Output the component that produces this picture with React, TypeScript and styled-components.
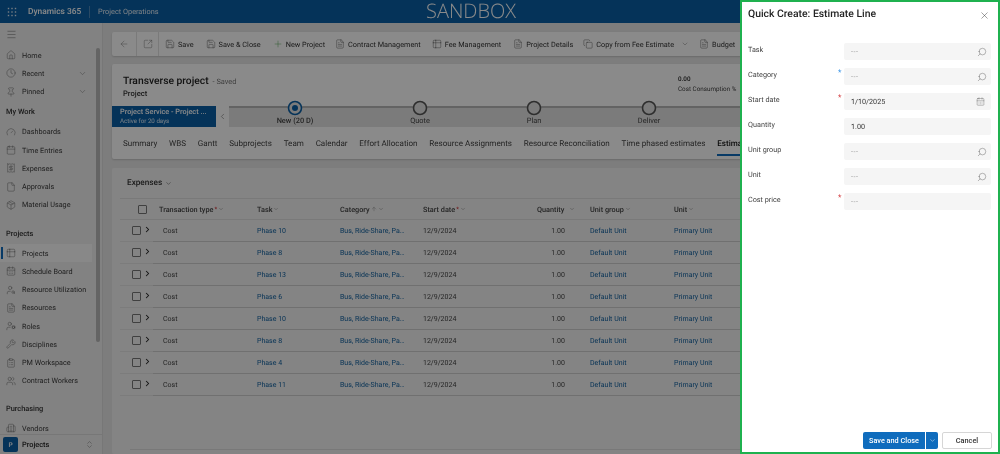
import React from "react";
import styled, { createGlobalStyle } from "styled-components";
import {
  ArrowLeft, Calendar, CalendarDays, ChevronDown, ChevronLeft, ChevronRight, ChevronsUpDown, ClipboardList, Clock,
  Copy, File, FileText, Gauge, Home, Menu, Package, Pin, Plus, Receipt, Save, Search, SquareArrowOutUpRight,
  Table2, UserCog, UserSearch, Users, Wrench, X, ArrowUp, Building2,
} from "lucide-react";

const Global = createGlobalStyle`
  html, body { margin: 0; padding: 0; width: 1000px; height: 454px; overflow: hidden; background: #fff; }
  body { font-family: Roboto, "Open Sans", sans-serif; color: #242424; text-rendering: geometricPrecision; }
  * { box-sizing: border-box; }
`;

const Page = styled.div`
  position: relative;
  width: 1000px;
  height: 454px;
  overflow: hidden;
  display: flex;
  flex-direction: column;
  filter: blur(0.35px);
`;
const Header = styled.header`
  height: 23px;
  flex: none;
  background: #0b5fa5;
  display: flex;
  align-items: center;
  color: #fff;
  position: relative;
`;
const Waffle = styled.span`
  display: flex;
  margin-left: 6px;
  width: 11px;
  justify-content: center;
  color: #dbe8f3;
`;
const Brand = styled.span`
  margin-left: 11px;
  font-size: 8.4px;
  font-weight: 500;
  width: 61px;
  white-space: nowrap;
`;
const AppName = styled.span`
  border-left: 1px solid #4d88ba;
  padding-left: 8px;
  font-size: 7.35px;
  line-height: 12px;
  white-space: nowrap;
  color: #e4eef6;
`;
const Sandbox = styled.span`
  position: absolute;
  left: 426px;
  top: 0;
  font-family: "Open Sans", sans-serif;
  font-size: 20px;
  font-weight: 300;
  line-height: 22px;
  color: #fff;
`;
const Body = styled.div`
  flex: 1;
  display: flex;
  min-height: 0;
  background: #e8e8e8;
`;
const Sidebar = styled.aside`
  position: relative;
  width: 103px;
  flex: none;
  background: #f0f0f0;
  border-right: 1px solid #dcdcdc;
  display: flex;
  flex-direction: column;
`;
const NavScroll = styled.nav`
  flex: 1;
  min-height: 0;
  overflow: hidden;
`;
const Hamburger = styled.div`
  height: 23px;
  padding-left: 6px;
  display: flex;
  align-items: center;
  color: #555;
`;
const NavItem = styled.div<{ $active?: boolean }>`
  position: relative;
  height: 18.25px;
  margin-right: 10px;
  padding-left: 6px;
  display: flex;
  align-items: center;
  gap: 6px;
  font-size: 7.25px;
  white-space: nowrap;
  color: #3a3a3a;
  background: ${(p) => (p.$active ? "#fbfbfb" : "transparent")};
  svg { flex: none; color: #555; }
`;
const ActiveMark = styled.span`
  position: absolute;
  left: 1px;
  top: 3px;
  width: 2px;
  height: 12px;
  background: #0f6cbd;
`;
const NavChevron = styled.span`
  margin-left: auto;
  margin-right: 5px;
  display: flex;
`;
const GroupTitle = styled.div<{ $gap?: number }>`
  height: 22px;
  margin-top: ${(p) => p.$gap ?? 0}px;
  padding-left: 6px;
  display: flex;
  align-items: center;
  font-size: 7.4px;
  font-weight: 500;
  color: #333;
`;
const ScrollThumb = styled.span`
  position: absolute;
  left: 96px;
  top: 25px;
  width: 4px;
  height: 294px;
  border-radius: 2px;
  background: #b9b9b9;
`;
const AreaSwitch = styled.div`
  height: 20px;
  flex: none;
  border-top: 1px solid #ddd;
  display: flex;
  align-items: center;
  padding: 0 8px 0 3px;
  font-size: 7.4px;
  font-weight: 500;
  background: #f0f0f0;
`;
const AreaBadge = styled.span`
  width: 15px;
  height: 15px;
  margin-right: 4px;
  border-radius: 2px;
  background: #0b5fa5;
  color: #fff;
  font-size: 6.5px;
  display: flex;
  align-items: center;
  justify-content: center;
`;
const AreaArrows = styled.span`
  margin-left: auto;
  display: flex;
  color: #555;
`;
const Main = styled.main`
  flex: 1;
  min-width: 0;
  padding: 9px 0 0 9px;
  display: flex;
  flex-direction: column;
  overflow: hidden;
`;
const CommandBar = styled.div`
  height: 24px;
  flex: none;
  margin-bottom: 8px;
  background: #fff;
  border-radius: 2px;
  box-shadow: 0 1px 2px rgba(0, 0, 0, 0.16);
  display: flex;
  align-items: center;
  font-size: 7.3px;
  white-space: nowrap;
  color: #333;
  overflow: hidden;
`;
const IconCell = styled.span<{ $w: number }>`
  width: ${(p) => p.$w}px;
  height: 100%;
  flex: none;
  display: flex;
  align-items: center;
  justify-content: center;
  color: #666;
  border-right: 1px solid #e2e2e2;
`;
const Command = styled.span<{ $left: number }>`
  margin-left: ${(p) => p.$left}px;
  flex: none;
  display: flex;
  align-items: center;
  gap: 3px;
  svg { color: #444; }
`;
const FormCard = styled.section`
  height: 95px;
  flex: none;
  margin-bottom: 9px;
  background: #fff;
  border-radius: 2px;
  box-shadow: 0 1px 2px rgba(0, 0, 0, 0.16);
  display: flex;
  flex-direction: column;
`;
const TitleRow = styled.div`
  height: 42px;
  flex: none;
  padding: 9px 0 0 11px;
  display: flex;
  justify-content: space-between;
`;
const Title = styled.div`
  font-size: 10.3px;
  font-weight: 500;
  line-height: 15px;
  white-space: nowrap;
`;
const Saved = styled.span`
  font-size: 7.4px;
  font-weight: 400;
  color: #777;
  margin-left: 4px;
`;
const EntityName = styled.div`
  font-size: 7.6px;
  font-weight: 500;
  line-height: 11px;
  margin-top: -1px;
  color: #333;
`;
const Metric = styled.div`
  width: 322px;
  padding-top: 1px;
  font-size: 6.3px;
  line-height: 10px;
  color: #444;
  white-space: nowrap;
  flex: none;
`;
const MetricValue = styled.div`
  font-weight: 500;
  color: #222;
`;
const Process = styled.div`
  height: 21px;
  flex: none;
  display: flex;
`;
const StageBanner = styled.div`
  width: 104px;
  flex: none;
  background: #0b5fa5;
  color: #fff;
  padding: 1px 0 0 8px;
  white-space: nowrap;
`;
const BannerTitle = styled.div`
  font-size: 7.3px;
  font-weight: 500;
  line-height: 10px;
`;
const BannerSub = styled.div`
  font-size: 6.2px;
  line-height: 8px;
  color: #dcebf7;
`;
const Collapse = styled.div`
  width: 13px;
  flex: none;
  background: #fff;
  display: flex;
  align-items: center;
  justify-content: center;
  color: #444;
`;
const Track = styled.div`
  flex: 1;
  min-width: 0;
  background: #e4e4e4;
  border-top: 2px solid #b8b8b8;
  display: flex;
`;
const Stage = styled.div<{ $left: number }>`
  width: 60px;
  flex: none;
  margin-left: ${(p) => p.$left}px;
  margin-top: -8px;
  display: flex;
  flex-direction: column;
  align-items: center;
`;
const StageLabel = styled.span<{ $active?: boolean }>`
  font-size: 7.4px;
  line-height: 10px;
  white-space: nowrap;
  font-weight: ${(p) => (p.$active ? 500 : 400)};
  color: #444;
`;
const Tabs = styled.div`
  flex: 1;
  display: flex;
  gap: 11.8px;
  padding-left: 11px;
  align-items: flex-start;
  overflow: hidden;
`;
const Tab = styled.span<{ $active?: boolean }>`
  flex: none;
  height: 29px;
  padding-top: 10px;
  font-size: 8.05px;
  line-height: 13px;
  white-space: nowrap;
  color: ${(p) => (p.$active ? "#111" : "#444")};
  font-weight: ${(p) => (p.$active ? 500 : 400)};
  border-bottom: ${(p) => (p.$active ? "2px solid #0f6cbd" : "none")};
`;
const GridCard = styled.section`
  flex: 1;
  min-height: 0;
  background: #f4f4f4;
  border-radius: 2px;
  padding-left: 8px;
  display: flex;
  flex-direction: column;
`;
const GridHead = styled.div`
  height: 30px;
  flex: none;
  display: flex;
  align-items: center;
  padding-left: 7px;
  font-size: 8.2px;
  font-weight: 500;
  gap: 3px;
  color: #333;
`;
const AddButton = styled.span`
  margin-left: 598px;
  margin-bottom: 5px;
  display: flex;
  color: #666;
`;
const HeadRow = styled.div`
  height: 22px;
  flex: none;
  display: flex;
  align-items: center;
  border-top: 1px solid #e0e0e0;
  border-bottom: 1px solid #e0e0e0;
  font-size: 7.3px;
  font-weight: 500;
  color: #444;
`;
const HeadLead = styled.div`
  width: 39px;
  flex: none;
  padding-left: 18px;
  display: flex;
`;
const Box = styled.span`
  width: 9px;
  height: 9px;
  flex: none;
  border: 1px solid #777;
  border-radius: 1px;
`;
const HeadColumns = styled.div`
  display: grid;
  grid-template-columns: 98px 83px 83px 100px 67px 84px 70px;
`;
const HeadCell = styled.span<{ $indent?: number }>`
  display: flex;
  align-items: center;
  gap: 1px;
  white-space: nowrap;
  padding-left: ${(p) => p.$indent ?? 0}px;
`;
const Required = styled.span`
  color: #d13438;
  font-size: 6px;
`;
const Row = styled.div`
  height: 22px;
  flex: none;
  display: flex;
`;
const RowLead = styled.div`
  width: 33px;
  flex: none;
  padding-left: 12px;
  display: flex;
  align-items: center;
  gap: 2px;
  border-bottom: 1px solid #e6e6e6;
  svg { color: #222; margin-top: -2px; }
`;
const Cells = styled.div`
  flex: 1;
  display: grid;
  grid-template-columns: 94px 83px 83px 100px 42px 25px 84px 70px;
  align-items: center;
  padding: 1px 0 0 10px;
  border-bottom: 1px solid #d0d0d0;
  font-size: 7px;
  color: #444;
  white-space: nowrap;
`;
const LinkCell = styled.span<{ $clip?: boolean }>`
  color: #11609f;
  ${(p) => (p.$clip ? "max-width: 65px; overflow: hidden; text-overflow: ellipsis;" : "")}
`;
const QtyCell = styled.span`
  text-align: right;
`;
const GridFooter = styled.div`
  margin: 53px 0 0 10px;
  border-top: 1px solid #dedede;
  height: 3px;
  flex: none;
`;
const Overlay = styled.div`
  position: absolute;
  inset: 0;
  background: rgba(0, 0, 0, 0.46);
`;
const Panel = styled.aside`
  position: absolute;
  left: 740px;
  top: 0;
  width: 260px;
  height: 454px;
  background: #fff;
  border: 2px solid #1fb14f;
  display: flex;
  flex-direction: column;
`;
const PanelHead = styled.div`
  height: 39px;
  flex: none;
  padding: 4px 8px 0 6px;
  display: flex;
  justify-content: space-between;
  align-items: flex-start;
`;
const PanelTitle = styled.h2`
  margin: 0;
  font-size: 10.4px;
  line-height: 16px;
  font-weight: 500;
  color: #242424;
  white-space: nowrap;
`;
const CloseBtn = styled.span`
  display: flex;
  margin-top: 4px;
  color: #333;
`;
const Fields = styled.div`
  flex: 1;
  padding: 2px 7px 0 6px;
  display: flex;
  flex-direction: column;
  gap: 8px;
`;
const Field = styled.div`
  height: 17px;
  display: flex;
`;
const Label = styled.label`
  width: 90px;
  flex: none;
  font-size: 7.25px;
  line-height: 13px;
  color: #444;
`;
const Mark = styled.span<{ $blue?: boolean }>`
  width: 6px;
  flex: none;
  font-size: 8px;
  line-height: 9px;
  color: ${(p) => (p.$blue ? "#2f8fe6" : "#d13438")};
`;
const Input = styled.div<{ $filled?: boolean }>`
  width: 147px;
  margin-left: auto;
  flex: none;
  border-radius: 2px;
  background: #f5f5f5;
  padding: 0 4px 0 7px;
  display: flex;
  align-items: center;
  justify-content: space-between;
  font-size: 7.2px;
  letter-spacing: ${(p) => (p.$filled ? "0" : "0.5px")};
  color: ${(p) => (p.$filled ? "#333" : "#9a9a9a")};
  svg { color: #555; }
`;
const DateIcon = styled.span`
  display: flex;
  margin-right: 2px;
`;
const PanelFoot = styled.div`
  height: 20px;
  flex: none;
  padding: 0 6px 3px 0;
  display: flex;
  justify-content: flex-end;
  align-items: center;
`;
const PrimaryBtn = styled.button`
  height: 17px;
  width: 62px;
  border: 0;
  padding: 0;
  border-radius: 2px 0 0 2px;
  background: #0f6cbd;
  color: #fff;
  font: 500 7.3px Roboto, sans-serif;
  white-space: nowrap;
`;
const SplitBtn = styled.button`
  height: 17px;
  width: 12px;
  margin-left: 1px;
  margin-right: 4px;
  border: 0;
  padding: 0;
  border-radius: 0 2px 2px 0;
  background: #0f6cbd;
  color: #fff;
  display: flex;
  align-items: center;
  justify-content: center;
`;
const CancelBtn = styled.button`
  height: 17px;
  width: 50px;
  border: 1px solid #d6d6d6;
  border-radius: 2px;
  background: #fff;
  color: #333;
  font: 500 7.3px Roboto, sans-serif;
`;

const Ic = { size: 10, strokeWidth: 1 };

const work = [
  { t: "Dashboards", i: Gauge },
  { t: "Time Entries", i: Calendar },
  { t: "Expenses", i: Receipt },
  { t: "Approvals", i: File },
  { t: "Material Usage", i: Package },
];
const projects = [
  { t: "Projects", i: Table2, active: true },
  { t: "Schedule Board", i: CalendarDays },
  { t: "Resource Utilization", i: UserSearch },
  { t: "Resources", i: FileText },
  { t: "Roles", i: UserCog },
  { t: "Disciplines", i: Wrench },
  { t: "PM Workspace", i: ClipboardList },
  { t: "Contract Workers", i: Users },
];
const tabs = ["Summary", "WBS", "Gantt", "Subprojects", "Team", "Calendar", "Effort Allocation", "Resource Assignments", "Resource Reconciliation", "Time phased estimates"];
const phases = ["Phase 10", "Phase 8", "Phase 13", "Phase 6", "Phase 10", "Phase 8", "Phase 4", "Phase 11"];
const fields = [
  { l: "Task", v: "---", s: true },
  { l: "Category", v: "---", s: true, m: "blue" },
  { l: "Start date", v: "1/10/2025", c: true, m: "red", f: true },
  { l: "Quantity", v: "1.00", f: true },
  { l: "Unit group", v: "---", s: true },
  { l: "Unit", v: "---", s: true },
  { l: "Cost price", v: "---", m: "red" },
];
const stages = [
  { t: "New  (20 D)", left: 36, active: true },
  { t: "Quote", left: 65 },
  { t: "Plan", left: 54 },
  { t: "Deliver", left: 55 },
];
const waffleDots = [1.5, 5, 8.5];

function Head({ children, req, indent }: { children: React.ReactNode; req?: boolean; indent?: number }) {
  return (
    <HeadCell $indent={indent}>
      {children}
      {req && <Required>*</Required>}
      <ChevronDown size={6} strokeWidth={1.2} />
    </HeadCell>
  );
}

export default function App() {
  return (
    <Page>
      <Global />
      <Header>
        <Waffle>
          <svg width="10" height="10" viewBox="0 0 10 10" fill="currentColor">
            {waffleDots.map((y) => waffleDots.map((x) => <rect key={`${x}-${y}`} x={x - 0.7} y={y - 0.7} width="1.4" height="1.4" />))}
          </svg>
        </Waffle>
        <Brand>Dynamics 365</Brand>
        <AppName>Project Operations</AppName>
        <Sandbox>SANDBOX</Sandbox>
      </Header>
      <Body>
        <Sidebar>
          <NavScroll>
            <Hamburger><Menu size={11} strokeWidth={1} /></Hamburger>
            <NavItem><Home {...Ic} />Home</NavItem>
            <NavItem><Clock {...Ic} />Recent<NavChevron><ChevronDown size={9} strokeWidth={1} /></NavChevron></NavItem>
            <NavItem><Pin {...Ic} />Pinned<NavChevron><ChevronDown size={9} strokeWidth={1} /></NavChevron></NavItem>
            <GroupTitle>My Work</GroupTitle>
            {work.map(({ t, i: I }) => <NavItem key={t}><I {...Ic} />{t}</NavItem>)}
            <GroupTitle $gap={8}>Projects</GroupTitle>
            {projects.map(({ t, i: I, active }) => (
              <NavItem key={t} $active={active}>{active && <ActiveMark />}<I {...Ic} />{t}</NavItem>
            ))}
            <GroupTitle $gap={7}>Purchasing</GroupTitle>
            <NavItem><Building2 {...Ic} />Vendors</NavItem>
          </NavScroll>
          <ScrollThumb />
          <AreaSwitch>
            <AreaBadge>P</AreaBadge>Projects
            <AreaArrows><ChevronsUpDown size={9} strokeWidth={1} /></AreaArrows>
          </AreaSwitch>
        </Sidebar>
        <Main>
          <CommandBar>
            <IconCell $w={25}><ArrowLeft {...Ic} /></IconCell>
            <IconCell $w={22}><SquareArrowOutUpRight {...Ic} /></IconCell>
            <Command $left={6}><Save {...Ic} />Save</Command>
            <Command $left={12}><Save {...Ic} />Save &amp; Close</Command>
            <Command $left={12}><Plus size={10} strokeWidth={1} color="#3c9a3c" />New Project</Command>
            <Command $left={10}><FileText {...Ic} />Contract Management</Command>
            <Command $left={11}><Table2 {...Ic} />Fee Management</Command>
            <Command $left={12}><FileText {...Ic} />Project Details</Command>
            <Command $left={10}><Copy {...Ic} />Copy from Fee Estimate</Command>
            <Command $left={7}><ChevronDown size={8} strokeWidth={1} /></Command>
            <Command $left={10}><FileText {...Ic} />Budget</Command>
          </CommandBar>
          <FormCard>
            <TitleRow>
              <div>
                <Title>Transverse project<Saved>- Saved</Saved></Title>
                <EntityName>Project</EntityName>
              </div>
              <Metric>
                <MetricValue>0.00</MetricValue>
                Cost Consumption %
              </Metric>
            </TitleRow>
            <Process>
              <StageBanner>
                <BannerTitle>Project Service - Project ...</BannerTitle>
                <BannerSub>Active for 20 days</BannerSub>
              </StageBanner>
              <Collapse><ChevronLeft size={9} strokeWidth={1.2} /></Collapse>
              <Track>
                {stages.map((s) => (
                  <Stage key={s.t} $left={s.left}>
                    <svg width="16" height="16" viewBox="0 0 16 16">
                      <circle cx="8" cy="8" r="6.5" fill="#e4e4e4" stroke={s.active ? "#0b5fa5" : "#555"} strokeWidth="1.6" />
                      {s.active && <circle cx="8" cy="8" r="3" fill="#0b5fa5" />}
                    </svg>
                    <StageLabel $active={s.active}>{s.t}</StageLabel>
                  </Stage>
                ))}
              </Track>
            </Process>
            <Tabs>
              {tabs.map((t) => <Tab key={t}>{t}</Tab>)}
              <Tab $active>Estimates</Tab>
            </Tabs>
          </FormCard>
          <GridCard>
            <GridHead>
              Expenses <ChevronDown size={7} strokeWidth={1.5} />
              <AddButton><Plus size={9} strokeWidth={1} /></AddButton>
            </GridHead>
            <HeadRow>
              <HeadLead><Box /></HeadLead>
              <HeadColumns>
                <Head req>Transaction type</Head>
                <Head>Task</Head>
                <Head>Category <ArrowUp size={6} strokeWidth={1} /></Head>
                <Head req>Start date</Head>
                <Head indent={14}>Quantity&nbsp;&nbsp;</Head>
                <Head>Unit group</Head>
                <Head>Unit</Head>
              </HeadColumns>
            </HeadRow>
            {phases.map((p, i) => (
              <Row key={i}>
                <RowLead><Box /><ChevronRight size={9} strokeWidth={2.8} /></RowLead>
                <Cells>
                  <span>Cost</span>
                  <LinkCell>{p}</LinkCell>
                  <LinkCell $clip>Bus, Ride-Share, Parking</LinkCell>
                  <span>12/9/2024</span>
                  <QtyCell>1.00</QtyCell>
                  <span />
                  <LinkCell>Default Unit</LinkCell>
                  <LinkCell>Primary Unit</LinkCell>
                </Cells>
              </Row>
            ))}
            <GridFooter />
          </GridCard>
        </Main>
      </Body>
      <Overlay />
      <Panel>
        <PanelHead>
          <PanelTitle>Quick Create: Estimate Line</PanelTitle>
          <CloseBtn><X size={11} strokeWidth={1} /></CloseBtn>
        </PanelHead>
        <Fields>
          {fields.map((f) => (
            <Field key={f.l}>
              <Label>{f.l}</Label>
              {f.m && <Mark $blue={f.m === "blue"}>*</Mark>}
              <Input $filled={f.f}>
                {f.v}
                {f.s && <Search size={10} strokeWidth={1} style={{ transform: "scaleX(-1)" }} />}
                {f.c && <DateIcon><CalendarDays size={9} strokeWidth={1} /></DateIcon>}
              </Input>
            </Field>
          ))}
        </Fields>
        <PanelFoot>
          <PrimaryBtn>Save and Close</PrimaryBtn>
          <SplitBtn><ChevronDown size={7} strokeWidth={1.5} /></SplitBtn>
          <CancelBtn>Cancel</CancelBtn>
        </PanelFoot>
      </Panel>
    </Page>
  );
}
